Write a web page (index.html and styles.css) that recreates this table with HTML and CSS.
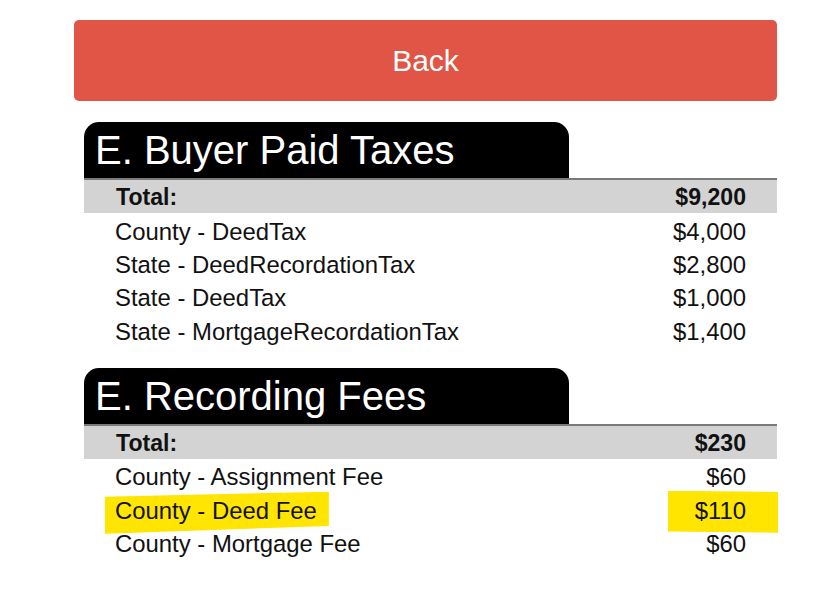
FILE: index.html
```html
<!DOCTYPE html>
<html>
<head>
<meta charset="utf-8">
<link rel="stylesheet" href="styles.css">
</head>
<body>
<div class="page">
  <button class="back">Back</button>

  <section class="block">
    <h2 class="tab">E. Buyer Paid Taxes</h2>
    <div class="table">
      <div class="row total"><span>Total:</span><span>$9,200</span></div>
      <div class="row"><span>County - DeedTax</span><span>$4,000</span></div>
      <div class="row"><span>State - DeedRecordationTax</span><span>$2,800</span></div>
      <div class="row"><span>State - DeedTax</span><span>$1,000</span></div>
      <div class="row"><span>State - MortgageRecordationTax</span><span>$1,400</span></div>
    </div>
  </section>

  <section class="block">
    <h2 class="tab">E. Recording Fees</h2>
    <div class="table">
      <div class="row total"><span>Total:</span><span>$230</span></div>
      <div class="row"><span>County - Assignment Fee</span><span>$60</span></div>
      <div class="row"><span class="mark mark-left">County - Deed Fee</span><span class="mark mark-right">$110</span></div>
      <div class="row"><span>County - Mortgage Fee</span><span>$60</span></div>
    </div>
  </section>
</div>
</body>
</html>
```

FILE: styles.css
```css
html, body {
  margin: 0;
  padding: 0;
  background: #ffffff;
}

body {
  font-family: "Liberation Sans", Arial, sans-serif;
  color: #111111;
}

.page {
  width: 703px;
  margin-left: 74px;
  padding-top: 20px;
  display: flex;
  flex-direction: column;
}

.back {
  height: 81px;
  width: 100%;
  border: none;
  border-radius: 5px;
  background: #e05545;
  color: #ffffff;
  font-family: "Liberation Sans", Arial, sans-serif;
  font-size: 30px;
  padding: 0;
  margin: 0 0 21px 0;
}

.block {
  margin-left: 10px;
  margin-bottom: 21px;
}

.tab {
  margin: 0;
  width: 485px;
  height: 56px;
  box-sizing: border-box;
  background: #000000;
  color: #ffffff;
  border-radius: 15px 15px 0 0;
  font-weight: normal;
  font-size: 40px;
  line-height: 56px;
  padding-left: 11px;
}

.table {
  border-top: 2px solid #7a7a7a;
}

.row {
  display: flex;
  justify-content: space-between;
  align-items: center;
  height: 33.4px;
  box-sizing: border-box;
  padding: 4px 31px 0 31px;
  font-size: 23.9px;
}

.row.total {
  height: 33px;
  padding-top: 2px;
  background: #d3d3d3;
  font-weight: bold;
  font-size: 23.1px;
  padding-left: 32px;
}

.mark {
  position: relative;
  z-index: 0;
}

.mark::before {
  content: "";
  position: absolute;
  z-index: -1;
  background: #ffe500;
}

.mark-left::before {
  left: -10px;
  right: -12px;
  top: -5px;
  bottom: -9px;
  clip-path: polygon(0 12%, 100% 0, 100% 82%, 0 100%);
}

.mark-right::before {
  left: -27px;
  right: -32px;
  top: -6px;
  bottom: -8px;
  clip-path: polygon(0 0, 100% 3%, 100% 100%, 0 97%);
}
```
